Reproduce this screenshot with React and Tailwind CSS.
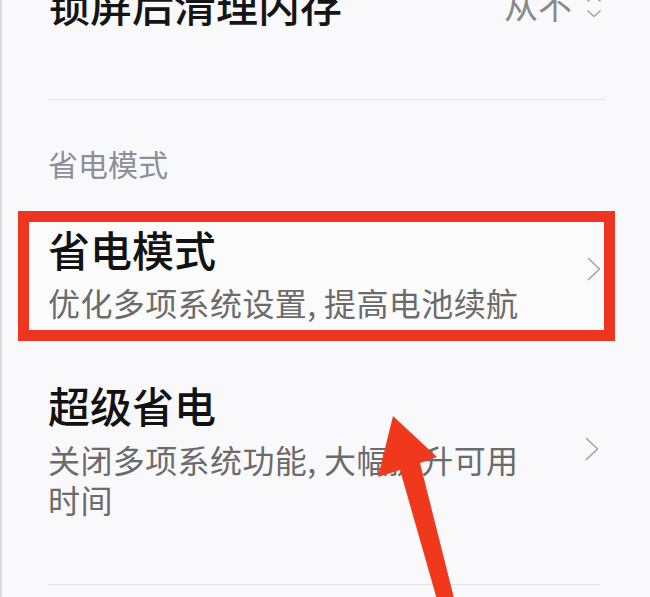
import { } from "react";

const font = { fontFamily: '"Noto Sans CJK SC", "Noto Sans", sans-serif' };

function Chevron({ className }) {
  return (
    <svg width="14" height="24" viewBox="0 0 14 24" className={className}>
      <polyline
        points="1.5,1.5 12.5,12 1.5,22.5"
        fill="none"
        stroke="#a3a3a3"
        strokeWidth="1.6"
        strokeLinecap="round"
        strokeLinejoin="round"
      />
    </svg>
  );
}

function UpDown() {
  return (
    <svg width="16" height="24" viewBox="0 0 16 24" className="shrink-0 mt-[4px]">
      <polyline points="2,7 8,1.5 14,7" fill="none" stroke="#a3a3a3" strokeWidth="1.6" strokeLinecap="round" strokeLinejoin="round" />
      <polyline points="2,17 8,22.5 14,17" fill="none" stroke="#a3a3a3" strokeWidth="1.6" strokeLinecap="round" strokeLinejoin="round" />
    </svg>
  );
}

export default function App() {
  return (
    <div
      className="relative w-[650px] h-[597px] overflow-hidden bg-[#f9f9fb] border-l-2 border-[#dcdcdf] pl-[46px] pr-[48px]"
      style={font}
    >
      {/* lock screen row, cut off at top */}
      <div className="flex items-center justify-between mt-[-17px] h-[42px]">
        <span className="text-[42px] leading-none font-medium text-[#151515]">
          锁屏后清理内存
        </span>
        <div className="flex items-center gap-[14px]">
          <span className="text-[34px] leading-none text-[#8a8a8a] mt-[2px]">从不</span>
          <UpDown />
        </div>
      </div>

      <div className="mt-[74px] h-px bg-[#e3e5e9] mr-[-3px]" />

      <div className="mt-[48px] text-[30px] leading-none text-[#8b8f99]">
        省电模式
      </div>

      {/* highlighted item */}
      <div className="mt-[33px] ml-[-30px] mr-[-13px] border-[11px] border-[#ee3521] bg-[#fbfbfc] pl-[19px] pr-[3px] pt-[6px] pb-[12px] flex items-center">
        <div className="flex-1">
          <div className="text-[42px] leading-none font-medium text-[#121212]">
            省电模式
          </div>
          <div className="mt-[16px] text-[32px] leading-none tracking-[0.4px] text-[#6b6b6b]">
            优化多项系统设置, 提高电池续航
          </div>
        </div>
        <Chevron className="shrink-0 mb-[9px]" />
      </div>

      {/* super power saving */}
      <div className="mt-[43px] flex items-center">
        <div className="flex-1">
          <div className="text-[42px] leading-none font-medium text-[#121212]">
            超级省电
          </div>
          <div className="mt-[13px] w-[490px] text-[32px] leading-[40px] tracking-[0.4px] text-[#6b6b6b]">
            关闭多项系统功能, 大幅提升可用时间
          </div>
        </div>
        <Chevron className="shrink-0 mb-[6px] mr-[3px]" />
      </div>

      <div className="mt-[65px] h-px bg-[#e3e5e9] mr-[2px]" />

      {/* annotation arrow */}
      <svg
        className="absolute left-0 top-0 pointer-events-none"
        width="650"
        height="597"
        viewBox="0 0 650 597"
      >
        <polygon
          points="391,416 435,457 418,463 455,610 438,610 398,470 376,477"
          fill="#f0381c"
        />
      </svg>
    </div>
  );
}
